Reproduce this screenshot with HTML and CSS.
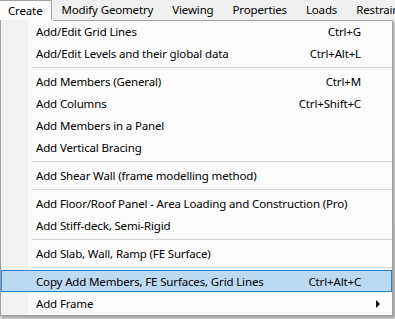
FILE: index.html
```html
<!DOCTYPE html>
<html lang="en">
<head>
  <meta charset="UTF-8" />
  <title>Create menu</title>
  <link rel="stylesheet" href="styles.css">
</head>
<body>

  <div class="menubar">
    <span class="top open">Create</span>
    <span class="top">Modify Geometry</span>
    <span class="top">Viewing</span>
    <span class="top">Properties</span>
    <span class="top">Loads</span>
    <span class="top">Restraints</span>
  </div>

  <div class="workspace"></div>

  <div class="dropdown">
    <div class="item"><span class="label">Add/Edit Grid Lines</span><span class="key">Ctrl+G</span></div>
    <div class="item"><span class="label">Add/Edit Levels and their global data</span><span class="key">Ctrl+Alt+L</span></div>
    <div class="sep"></div>
    <div class="item"><span class="label">Add Members (General)</span><span class="key">Ctrl+M</span></div>
    <div class="item"><span class="label">Add Columns</span><span class="key">Ctrl+Shift+C</span></div>
    <div class="item"><span class="label">Add Members in a Panel</span></div>
    <div class="item"><span class="label">Add Vertical Bracing</span></div>
    <div class="sep"></div>
    <div class="item"><span class="label">Add Shear Wall (frame modelling method)</span></div>
    <div class="sep"></div>
    <div class="item"><span class="label">Add Floor/Roof Panel - Area Loading and Construction (Pro)</span></div>
    <div class="item"><span class="label">Add Stiff-deck, Semi-Rigid</span></div>
    <div class="sep"></div>
    <div class="item"><span class="label">Add Slab, Wall, Ramp (FE Surface)</span></div>
    <div class="sep"></div>
    <div class="item hot"><span class="label">Copy Add Members, FE Surfaces, Grid Lines</span><span class="key">Ctrl+Alt+C</span></div>
    <div class="item"><span class="label">Add Frame</span><span class="arrow"></span></div>
  </div>

</body>
</html>
```

FILE: styles.css
```css
* {
  box-sizing: border-box;
  margin: 0;
}

body {
  font-family: "Noto Sans", "Open Sans", sans-serif;
  font-size: 11.5px;
  letter-spacing: -0.15px;
  color: #000;
  background: #e9e9e9;
  height: 319px;
  overflow: hidden;
}

.menubar {
  height: 20px;
  background: #f0f0f0;
  display: flex;
  align-items: stretch;
  white-space: nowrap;
  overflow: hidden;
}

.top {
  padding: 0 10px 0 9px;
  line-height: 20px;
}

.top.open {
  padding: 0 9px 0 8px;
  width: 53px;
  background: #fbfbfb;
  border-right: 1px solid #a0a0a0;
  border-top: 1px solid #a0a0a0;
  line-height: 19px;
}

.workspace {
  height: 299px;
  background: linear-gradient(#ececec, #d9d9d9);
}

/* popup menu */
.dropdown {
  position: absolute;
  top: 20px;
  left: 0;
  width: 393px;
  height: 296px;
  border: 1px solid #a0a0a0;
  border-top: none;
  background: linear-gradient(to right, #f2f2f2 27px, #fbfbfb 27px);
  box-shadow: 2px 2px 2px rgba(0, 0, 0, 0.25);
}

.dropdown::before {
  content: "";
  position: absolute;
  top: 0;
  left: 52px;
  right: -1px;
  height: 1px;
  background: #a0a0a0;
}

.item {
  height: 22px;
  display: flex;
  align-items: center;
  padding: 0 30px 0 34px;
  border: 1px solid transparent;
  white-space: nowrap;
  position: relative;
}

.item .label {
  flex: 1;
}

.item .key {
  text-align: right;
}

.item.hot {
  background: #bcd9f2;
  border-color: #2b7fd1;
}

.sep {
  height: 6px;
  margin-left: 31px;
  padding-top: 3px;
}

.sep::after {
  content: "";
  display: block;
  height: 1px;
  background: #d4d4d4;
}

.arrow {
  position: absolute;
  right: 11px;
  top: 7px;
  width: 0;
  height: 0;
  border-top: 4px solid transparent;
  border-bottom: 4px solid transparent;
  border-left: 4px solid #000;
}
```
